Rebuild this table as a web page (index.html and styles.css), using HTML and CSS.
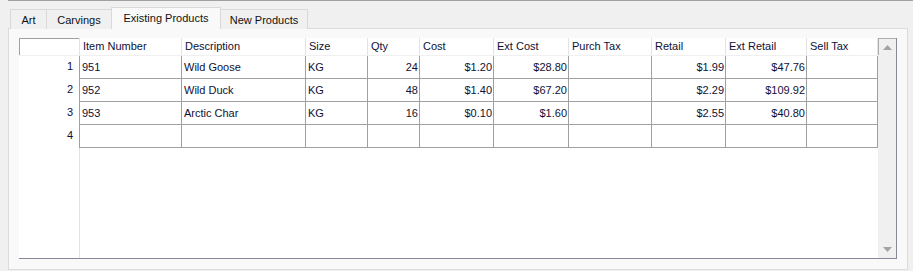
FILE: index.html
```html
<!DOCTYPE html>
<html>
<head>
<meta charset="utf-8">
<link rel="stylesheet" href="styles.css">
</head>
<body>
<div class="topline"></div>
<div class="tabs">
  <div class="tab t-art">Art</div>
  <div class="tab t-carv">Carvings</div>
  <div class="tab t-exist sel">Existing Products</div>
  <div class="tab t-new">New Products</div>
</div>
<div class="panel">
  <div class="grid">
    <div class="main">
      <div class="hdr">
        <div class="corner"></div>
        <div class="hc w1">Item Number</div>
        <div class="hc w2">Description</div>
        <div class="hc w3">Size</div>
        <div class="hc w4">Qty</div>
        <div class="hc w5">Cost</div>
        <div class="hc w6">Ext Cost</div>
        <div class="hc w7">Purch Tax</div>
        <div class="hc w8">Retail</div>
        <div class="hc w9">Ext Retail</div>
        <div class="hc w10 last">Sell Tax</div>
      </div>
      <div class="row">
        <div class="rn">1</div>
        <div class="c w1">951</div>
        <div class="c w2">Wild Goose</div>
        <div class="c w3">KG</div>
        <div class="c w4 num">24</div>
        <div class="c w5 num">$1.20</div>
        <div class="c w6 num">$28.80</div>
        <div class="c w7"></div>
        <div class="c w8 num">$1.99</div>
        <div class="c w9 num">$47.76</div>
        <div class="c w10 last"></div>
      </div>
      <div class="row">
        <div class="rn">2</div>
        <div class="c w1">952</div>
        <div class="c w2">Wild Duck</div>
        <div class="c w3">KG</div>
        <div class="c w4 num">48</div>
        <div class="c w5 num">$1.40</div>
        <div class="c w6 num">$67.20</div>
        <div class="c w7"></div>
        <div class="c w8 num">$2.29</div>
        <div class="c w9 num">$109.92</div>
        <div class="c w10 last"></div>
      </div>
      <div class="row">
        <div class="rn">3</div>
        <div class="c w1">953</div>
        <div class="c w2">Arctic Char</div>
        <div class="c w3">KG</div>
        <div class="c w4 num">16</div>
        <div class="c w5 num">$0.10</div>
        <div class="c w6 num">$1.60</div>
        <div class="c w7"></div>
        <div class="c w8 num">$2.55</div>
        <div class="c w9 num">$40.80</div>
        <div class="c w10 last"></div>
      </div>
      <div class="row">
        <div class="rn">4</div>
        <div class="c w1"></div>
        <div class="c w2"></div>
        <div class="c w3"></div>
        <div class="c w4"></div>
        <div class="c w5"></div>
        <div class="c w6"></div>
        <div class="c w7"></div>
        <div class="c w8"></div>
        <div class="c w9"></div>
        <div class="c w10 last"></div>
      </div>
      <div class="filler"><div class="fill-rn"></div></div>
    </div>
    <div class="vscroll">
      <div class="sbtn up"><svg class="arr" width="9" height="5" viewBox="0 0 9 5"><polygon points="0,5 4.5,0 9,5" fill="#a3a3a3"/></svg></div>
      <div class="track"></div>
      <div class="sbtn down"><svg class="arr" width="9" height="5" viewBox="0 0 9 5"><polygon points="0,0 9,0 4.5,5" fill="#a3a3a3"/></svg></div>
    </div>
  </div>
</div>
</body>
</html>
```

FILE: styles.css
```css
* { box-sizing: border-box; }
html, body {
  margin: 0;
  padding: 0;
  background: #f0f0f0;
  font-family: "Liberation Sans", Arial, sans-serif;
  font-size: 11px;
  color: #101034;
}
.topline {
  height: 1px;
  margin-left: 8px;
  background: #a0a0a0;
}
.tabs {
  display: flex;
  align-items: flex-end;
  height: 28px;
  margin-left: 10px;
  margin-bottom: -1px;
}
.tab {
  height: 20px;
  border: 1px solid #d9d9d9;
  border-bottom: none;
  background: #f0f0f0;
  display: flex;
  align-items: center;
  justify-content: center;
  padding-top: 1px;
  font-size: 11px;
  color: #111;
  white-space: nowrap;
}
.tab + .tab { margin-left: -1px; }
.t-art { width: 37px; }
.t-carv { width: 66px; }
.t-exist { width: 110px; }
.t-new { width: 88px; }
.tab.sel {
  position: relative;
  z-index: 1;
  height: 22px;
  background: #f9f9f9;
  padding-top: 0;
  padding-bottom: 2px;
}
.panel {
  margin-left: 8px;
  width: 900px;
  height: 242px;
  border: 1px solid #dcdcdc;
  background: #f9f9f9;
  padding: 9px 10px 10px 10px;
}
.grid {
  display: flex;
  width: 878px;
  height: 221px;
  border-right: 1px solid #868a98;
  border-bottom: 1px solid #868a98;
  background: #fff;
}
.main {
  width: 859px;
  display: flex;
  flex-direction: column;
}
.hdr {
  display: flex;
  height: 18px;
  border-bottom: 1px solid #f0f0f0;
}
.corner {
  width: 60px;
  border-top: 1px solid #a0a0a0;
  border-left: 1px solid #a0a0a0;
}
.hc {
  border-left: 1px solid #e3e3e3;
  padding-left: 3px;
  line-height: 17px;
  height: 17px;
  overflow: hidden;
  white-space: nowrap;
}
.hc.last { border-right: 1px solid #e3e3e3; }
.w1 { width: 102px; }
.w2 { width: 124px; }
.w3 { width: 62px; }
.w4 { width: 52px; }
.w5 { width: 74px; }
.w6 { width: 75px; }
.w7 { width: 83px; }
.w8 { width: 74px; }
.w9 { width: 81px; }
.w10 { width: 71px; }
.w10.last { width: 72px; }
.row {
  display: flex;
  height: 23px;
}
.rn {
  width: 60px;
  text-align: right;
  padding-right: 6px;
  line-height: 20px;
}
.c {
  border-left: 1px solid #a0a0a0;
  border-bottom: 1px solid #a0a0a0;
  padding: 0 2px;
  line-height: 23px;
  white-space: nowrap;
  overflow: hidden;
}
.c.last { border-right: 1px solid #a0a0a0; }
.c.num { text-align: right; padding-right: 1px; }
.filler {
  flex: 1;
  display: flex;
}
.fill-rn {
  width: 61px;
  border-right: 1px solid #e3e3e3;
}
.vscroll {
  width: 18px;
  background: #f0f0f0;
  display: flex;
  flex-direction: column;
}
.sbtn {
  height: 17px;
  display: flex;
  align-items: center;
  justify-content: center;
}
.sbtn.up {
  border-top: 1px solid #adadad;
  border-left: 1px solid #adadad;
}
.track { flex: 1; }
.arr { display: block; }
```
